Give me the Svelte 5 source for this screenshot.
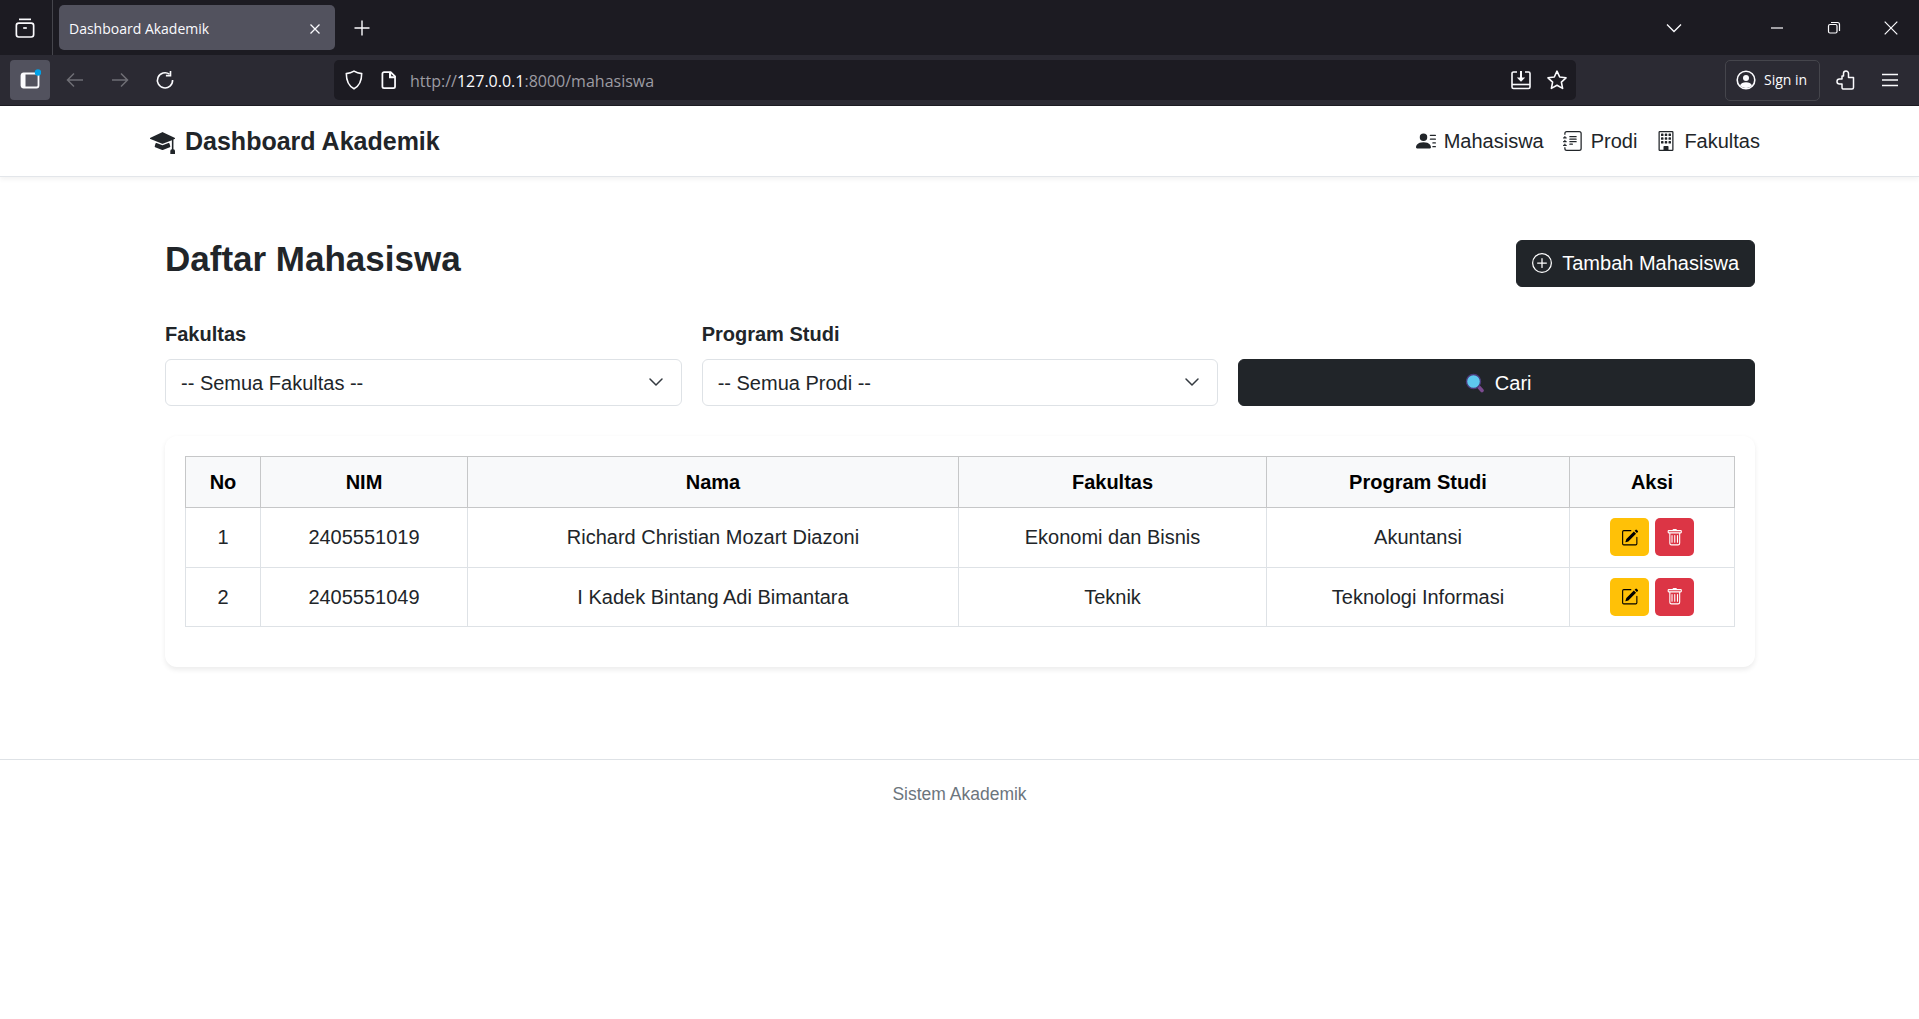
<script lang="ts">
  const rows = [
    { no: 1, nim: '2405551019', nama: 'Richard Christian Mozart Diazoni', fakultas: 'Ekonomi dan Bisnis', prodi: 'Akuntansi' },
    { no: 2, nim: '2405551049', nama: 'I Kadek Bintang Adi Bimantara', fakultas: 'Teknik', prodi: 'Teknologi Informasi' }
  ]
</script>

<div class="browser">
  <div class="tabbar">
    <div class="tabs-btn">
      <svg width="24" height="24" viewBox="0 0 20 20" fill="none" stroke="#fbfbfe" stroke-width="1.4"><path d="M5 2.800h10"/><rect x="2.800" y="6" width="14.400" height="11.500" rx="2"/><path d="M8.500 10h3"/></svg>
    </div>
    <div class="tab">
      <span class="tab-title">Dashboard Akademik</span>
      <svg width="12" height="12" viewBox="0 0 12 12" stroke="#fbfbfe" stroke-width="1.3"><path d="M1.500 1.500l9 9M10.500 1.500l-9 9"/></svg>
    </div>
    <div class="newtab">
      <svg width="16" height="16" viewBox="0 0 16 16" stroke="#fbfbfe" stroke-width="1.4"><path d="M8 .5v15M.5 8h15"/></svg>
    </div>
    <div class="grow"></div>
    <svg class="win-chev" width="16" height="10" viewBox="0 0 16 10" fill="none" stroke="#fbfbfe" stroke-width="1.3"><path d="M1 1.500l7 7 7-7"/></svg>
    <div class="win-btn">
      <svg width="14" height="14" viewBox="0 0 14 14" stroke="#fbfbfe" stroke-width="1.2"><path d="M1 7h12"/></svg>
    </div>
    <div class="win-btn">
      <svg width="14" height="14" viewBox="0 0 14 14" fill="none" stroke="#fbfbfe" stroke-width="1.2"><rect x="1.500" y="3.500" width="8.500" height="8.500" rx="1.500"/><path d="M4 1.500h6.500a2 2 0 0 1 2 2V10"/></svg>
    </div>
    <div class="win-btn">
      <svg width="14" height="14" viewBox="0 0 14 14" stroke="#fbfbfe" stroke-width="1.2"><path d="M.7.7l12.600 12.600M13.300.7L.7 13.300"/></svg>
    </div>
  </div>

  <div class="toolbar">
    <div class="sidebar-btn">
      <svg width="22" height="22" viewBox="0 0 22 22"><rect x="2.500" y="4.500" width="17" height="14" rx="2" fill="none" stroke="#fbfbfe" stroke-width="1.800"/><rect x="2.500" y="4.500" width="4" height="14" fill="#fbfbfe"/><circle cx="19" cy="3.500" r="3.200" fill="#00a2e8"/></svg>
    </div>
    <svg class="nav-ic back" width="20" height="20" viewBox="0 0 20 20" fill="none" stroke="#6e6e75" stroke-width="1.5"><path d="M18 10H2.500M9 3.500L2.500 10 9 16.500"/></svg>
    <svg class="nav-ic" width="20" height="20" viewBox="0 0 20 20" fill="none" stroke="#6e6e75" stroke-width="1.5"><path d="M2 10h15.500M11 3.500l6.500 6.500-6.500 6.500"/></svg>
    <svg class="nav-ic" width="20" height="20" viewBox="0 0 20 20" fill="none" stroke="#fbfbfe" stroke-width="1.600"><path d="M14.500 4.200A7.600 7.600 0 1 0 17.600 10"/><path d="M15.500 1v4.600h-4.600" /></svg>

    <div class="urlbar">
      <svg class="shield" width="22" height="22" viewBox="0 0 20 20" fill="none" stroke="#fbfbfe" stroke-width="1.400"><path d="M10 2c2.200 1.400 4.300 2 7 2.200C17 11 15 15.500 10 18 5 15.500 3 11 3 4.200 5.700 4 7.800 3.400 10 2z"/></svg>
      <svg width="20" height="22" viewBox="0 0 18 20" fill="none" stroke="#fbfbfe" stroke-width="1.600"><path d="M4.500 2.800h6l4 4v9a1.500 1.500 0 0 1-1.500 1.500H4.500A1.500 1.500 0 0 1 3 15.800V4.300a1.500 1.500 0 0 1 1.500-1.500z"/><path d="M10 3v4.500h4.500" stroke-width="2"/></svg>
      <span class="url"><span class="dim">http://</span>127.0.0.1<span class="dim">:8000/mahasiswa</span></span>
      <div class="grow"></div>
      <svg class="url-end" width="22" height="22" viewBox="0 0 22 22" fill="none" stroke="#fbfbfe" stroke-width="1.600"><path d="M7 3H3.500A1.500 1.500 0 0 0 2 4.500V18a1.500 1.500 0 0 0 1.500 1.500h15A1.500 1.500 0 0 0 20 18V4.500A1.500 1.500 0 0 0 18.500 3H15"/><path d="M2 15.500h18"/><path d="M11 2v9" stroke-width="2"/><path d="M6.800 8.500L11 12.800l4.200-4.300z" fill="#fbfbfe" stroke="none"/></svg>
      <svg width="22" height="22" viewBox="0 0 22 22" fill="none" stroke="#fbfbfe" stroke-width="1.600" stroke-linejoin="round"><path d="M11 2.200l2.700 5.800 6.300.8-4.600 4.300 1.200 6.300L11 16.300l-5.600 3.100 1.200-6.300L2 8.800l6.300-.8z"/></svg>
    </div>

    <div class="signin">
      <svg width="20" height="20" viewBox="0 0 20 20" fill="none" stroke="#fbfbfe" stroke-width="1.600"><circle cx="10" cy="10" r="8.800"/><circle cx="10" cy="8" r="3" fill="#fbfbfe" stroke="none"/><path d="M4 15.500c1-2.500 3-3.200 6-3.200s5 .7 6 3.200c-1.500 1.600-3.600 2.500-6 2.500s-4.500-.9-6-2.500z" fill="#fbfbfe" stroke="none"/></svg>
      <span>Sign in</span>
    </div>
    <svg class="ext" width="20" height="20" viewBox="0 0 20 20" fill="none" stroke="#fbfbfe" stroke-width="1.5" stroke-linejoin="round"><path d="M7 19h9a1.500 1.500 0 0 0 1.500-1.500V7.500H12.500V3.500a2.500 2.500 0 0 0-5 0v2.500H6v3H3.500a2.500 2.500 0 0 0 0 5H6v3.500A1.500 1.500 0 0 0 7 19z"/></svg>
    <svg class="menu" width="16" height="14" viewBox="0 0 16 14" stroke="#fbfbfe" stroke-width="1.5"><path d="M0 1.500h16M0 7h16M0 12.500h16"/></svg>
  </div>
</div>

<nav class="navbar">
  <a class="brand" href="#top">
    <svg class="bi" viewBox="0 0 16 16" fill="currentColor"><path d="M8.211 2.047a.5.5 0 0 0-.422 0l-7.500 3.500a.5.5 0 0 0 .025.917l7.500 3a.5.5 0 0 0 .372 0L14 7.140V13a1 1 0 0 0-1 1v2h3v-2a1 1 0 0 0-1-1V6.739l.686-.275a.5.5 0 0 0 .025-.917z"/><path d="M4.176 9.032a.5.5 0 0 0-.656.327l-.5 1.700a.5.5 0 0 0 .294.605l4.500 1.800a.5.5 0 0 0 .372 0l4.500-1.800a.5.5 0 0 0 .294-.605l-.5-1.700a.5.5 0 0 0-.656-.327L8 10.466z"/></svg>
    Dashboard Akademik
  </a>
  <div class="nav-links">
    <a href="#top">
      <svg class="bi" viewBox="0 0 16 16" fill="currentColor"><path d="M6 8a3 3 0 1 0 0-6 3 3 0 0 0 0 6m-5 6s-1 0-1-1 1-4 6-4 6 3 6 4-1 1-1 1zM11 3.500a.5.5 0 0 1 .5-.5h4a.5.5 0 0 1 0 1h-4a.5.5 0 0 1-.5-.5m.5 2.500a.5.5 0 0 0 0 1h4a.5.5 0 0 0 0-1zm2 3a.5.5 0 0 0 0 1h2a.5.5 0 0 0 0-1zm0 3a.5.5 0 0 0 0 1h2a.5.5 0 0 0 0-1z"/></svg>
      Mahasiswa
    </a>
    <a href="#top">
      <svg class="bi" viewBox="0 0 16 16" fill="currentColor"><path d="M5 10.500a.5.5 0 0 1 .5-.5h2a.5.5 0 0 1 0 1h-2a.5.5 0 0 1-.5-.5m0-2a.5.5 0 0 1 .5-.5h5a.5.5 0 0 1 0 1h-5a.5.5 0 0 1-.5-.5m0-2a.5.5 0 0 1 .5-.5h5a.5.5 0 0 1 0 1h-5a.5.5 0 0 1-.5-.5m0-2a.5.5 0 0 1 .5-.5h5a.5.5 0 0 1 0 1h-5a.5.5 0 0 1-.5-.5"/><path d="M3 0h10a2 2 0 0 1 2 2v12a2 2 0 0 1-2 2H3a2 2 0 0 1-2-2v-1h1v1a1 1 0 0 0 1 1h10a1 1 0 0 0 1-1V2a1 1 0 0 0-1-1H3a1 1 0 0 0-1 1v1H1V2a2 2 0 0 1 2-2"/><path d="M1 5v-.5a.5.5 0 0 1 1 0V5h.5a.5.5 0 0 1 0 1h-2a.5.5 0 0 1 0-1zm0 3v-.5a.5.5 0 0 1 1 0V8h.5a.5.5 0 0 1 0 1h-2a.5.5 0 0 1 0-1zm0 3v-.5a.5.5 0 0 1 1 0v.5h.5a.5.5 0 0 1 0 1h-2a.5.5 0 0 1 0-1z"/></svg>
      Prodi
    </a>
    <a href="#top">
      <svg class="bi" viewBox="0 0 16 16" fill="currentColor"><path d="M4 2.500a.5.5 0 0 1 .5-.5h1a.5.5 0 0 1 .5.500v1a.5.5 0 0 1-.5.500h-1a.5.5 0 0 1-.5-.5zm3 0a.5.5 0 0 1 .5-.5h1a.5.5 0 0 1 .5.500v1a.5.5 0 0 1-.5.500h-1a.5.5 0 0 1-.5-.5zm3.500-.5a.5.5 0 0 0-.5.500v1a.5.5 0 0 0 .5.500h1a.5.5 0 0 0 .5-.5v-1a.5.5 0 0 0-.5-.5zM4 5.500a.5.5 0 0 1 .5-.5h1a.5.5 0 0 1 .5.500v1a.5.5 0 0 1-.5.500h-1a.5.5 0 0 1-.5-.5zM7.500 5a.5.5 0 0 0-.5.500v1a.5.5 0 0 0 .5.500h1a.5.5 0 0 0 .5-.5v-1a.5.5 0 0 0-.5-.5zm2.500.500a.5.5 0 0 1 .5-.5h1a.5.5 0 0 1 .5.500v1a.5.5 0 0 1-.5.500h-1a.5.5 0 0 1-.5-.5zM4.500 8a.5.5 0 0 0-.5.500v1a.5.5 0 0 0 .5.500h1a.5.5 0 0 0 .5-.5v-1a.5.5 0 0 0-.5-.5zm2.500.500a.5.5 0 0 1 .5-.5h1a.5.5 0 0 1 .5.500v1a.5.5 0 0 1-.5.500h-1a.5.5 0 0 1-.5-.5zm3.500-.5a.5.5 0 0 0-.5.500v1a.5.5 0 0 0 .5.500h1a.5.5 0 0 0 .5-.5v-1a.5.5 0 0 0-.5-.5z"/><path d="M2 1a1 1 0 0 1 1-1h10a1 1 0 0 1 1 1v14a1 1 0 0 1-1 1H3a1 1 0 0 1-1-1zm11 0H3v14h3v-2.500a.5.5 0 0 1 .5-.5h3a.5.5 0 0 1 .5.500V15h3z"/></svg>
      Fakultas
    </a>
  </div>
</nav>

<main class="page">
  <div class="head">
    <h3>Daftar Mahasiswa</h3>
    <button class="btn dark add">
      <svg class="bi" viewBox="0 0 16 16" fill="currentColor"><path d="M8 15A7 7 0 1 1 8 1a7 7 0 0 1 0 14m0 1A8 8 0 1 0 8 0a8 8 0 0 0 0 16"/><path d="M8 4a.5.5 0 0 1 .5.500v3h3a.5.5 0 0 1 0 1h-3v3a.5.5 0 0 1-1 0v-3h-3a.5.5 0 0 1 0-1h3v-3A.5.5 0 0 1 8 4"/></svg>
      Tambah Mahasiswa
    </button>
  </div>

  <form class="filters">
    <div class="field">
      <label for="fakultas">Fakultas</label>
      <div class="select">
        <select id="fakultas"><option>-- Semua Fakultas --</option></select>
        <svg width="16" height="16" viewBox="0 0 16 16" fill="none" stroke="#343a40" stroke-width="1.500" stroke-linecap="round" stroke-linejoin="round"><path d="m2 5 6 6 6-6"/></svg>
      </div>
    </div>
    <div class="field">
      <label for="prodi">Program Studi</label>
      <div class="select">
        <select id="prodi"><option>-- Semua Prodi --</option></select>
        <svg width="16" height="16" viewBox="0 0 16 16" fill="none" stroke="#343a40" stroke-width="1.500" stroke-linecap="round" stroke-linejoin="round"><path d="m2 5 6 6 6-6"/></svg>
      </div>
    </div>
    <button class="btn dark search" type="button">
      <svg width="20" height="20" viewBox="0 0 20 20"><path d="M12.500 12.500l4.500 5" stroke="#7b4a8f" stroke-width="3.600" stroke-linecap="round"/><circle cx="8.500" cy="8.500" r="7" fill="#5ec8ee" stroke="#4b3a7a" stroke-width="1.400"/></svg>
      Cari
    </button>
  </form>

  <div class="card">
    <table>
      <colgroup>
        <col style="width: 75px" />
        <col style="width: 207px" />
        <col style="width: 491px" />
        <col style="width: 308px" />
        <col style="width: 303px" />
        <col style="width: 165px" />
      </colgroup>
      <thead>
        <tr>
          <th>No</th>
          <th>NIM</th>
          <th>Nama</th>
          <th>Fakultas</th>
          <th>Program Studi</th>
          <th>Aksi</th>
        </tr>
      </thead>
      <tbody>
        {#each rows as r}
          <tr>
            <td>{r.no}</td>
            <td>{r.nim}</td>
            <td>{r.nama}</td>
            <td>{r.fakultas}</td>
            <td>{r.prodi}</td>
            <td>
              <div class="actions">
                <button class="act edit" aria-label="Edit">
                  <svg class="bi" viewBox="0 0 16 16" fill="currentColor"><path d="M15.502 1.940a.5.5 0 0 1 0 .706L14.459 3.690l-2-2L13.502.646a.5.5 0 0 1 .707 0l1.293 1.293zm-1.750 2.456-2-2L4.939 9.210a.5.5 0 0 0-.121.196l-.805 2.414a.25.25 0 0 0 .316.316l2.414-.805a.5.5 0 0 0 .196-.12l6.813-6.814z"/><path d="M1 13.500A1.500 1.500 0 0 0 2.500 15h11a1.500 1.500 0 0 0 1.500-1.500v-6a.5.5 0 0 0-1 0v6a.5.5 0 0 1-.5.5h-11a.5.5 0 0 1-.5-.5v-11a.5.5 0 0 1 .5-.5H9a.5.5 0 0 0 0-1H2.500A1.500 1.500 0 0 0 1 2.500z"/></svg>
                </button>
                <button class="act del" aria-label="Hapus">
                  <svg class="bi" viewBox="0 0 16 16" fill="currentColor"><path d="M5.500 5.500A.5.5 0 0 1 6 6v6a.5.5 0 0 1-1 0V6a.5.5 0 0 1 .5-.5m2.500 0a.5.5 0 0 1 .5.500v6a.5.5 0 0 1-1 0V6a.5.5 0 0 1 .5-.5m3 .500a.5.5 0 0 0-1 0v6a.5.5 0 0 0 1 0z"/><path d="M14.500 3a1 1 0 0 1-1 1H13v9a2 2 0 0 1-2 2H5a2 2 0 0 1-2-2V4h-.5a1 1 0 0 1-1-1V2a1 1 0 0 1 1-1H6a1 1 0 0 1 1-1h2a1 1 0 0 1 1 1h3.500a1 1 0 0 1 1 1zM4.118 4 4 4.059V13a1 1 0 0 0 1 1h6a1 1 0 0 0 1-1V4.059L11.882 4zM2.500 3h11V2h-11z"/></svg>
                </button>
              </div>
            </td>
          </tr>
        {/each}
      </tbody>
    </table>
  </div>
</main>

<footer class="footer">Sistem Akademik</footer>

<style>
  :global(body) {
    margin: 0;
    background: #fff;
    color: #212529;
    font-family: "Liberation Sans", Arial, sans-serif;
    font-size: 20px;
    line-height: 30px;
  }

  .grow { flex: 1; }

  /* browser chrome */
  .browser {
    height: 106px;
    background: #2b2a33;
    font-family: "Open Sans", sans-serif;
  }
  .tabbar {
    height: 55px;
    background: #1c1b22;
    display: flex;
    align-items: center;
  }
  .tabs-btn {
    width: 53px;
    height: 55px;
    box-sizing: border-box;
    border-right: 1px solid #45454c;
    padding-left: 13px;
    display: flex;
    align-items: center;
    flex-shrink: 0;
  }
  .tab {
    margin-left: 6px;
    width: 276px;
    height: 45px;
    box-sizing: border-box;
    padding: 2px 14px 0 10px;
    background: #52525e;
    border-radius: 5px;
    color: #fbfbfe;
    display: flex;
    align-items: center;
    justify-content: space-between;
  }
  .tab-title { font-size: 14px; line-height: 20px; }
  .newtab { margin-left: 19px; display: flex; }
  .win-chev { margin-right: 66px; }
  .win-btn {
    width: 57px;
    display: flex;
    justify-content: center;
  }
  .toolbar {
    height: 50px;
    display: flex;
    align-items: center;
    border-bottom: 1px solid #1c1b22;
  }
  .sidebar-btn {
    margin-left: 10px;
    width: 40px;
    height: 40px;
    background: #52525e;
    border-radius: 4px;
    display: flex;
    align-items: center;
    justify-content: center;
  }
  .nav-ic { margin-left: 25px; }
  .back { margin-left: 15px; }
  .urlbar {
    margin-left: 159px;
    width: 1242px;
    height: 40px;
    background: #1c1b22;
    border-radius: 5px;
    display: flex;
    align-items: center;
    padding: 0 8px 0 9px;
    box-sizing: border-box;
  }
  .shield { margin-right: 14px; }
  .url {
    margin-left: 11px;
    padding-top: 2px;
    font-size: 16px;
    line-height: 20px;
    color: #fbfbfe;
  }
  .dim { color: #9c9ca3; }
  .url-end { margin-right: 14px; }
  .signin {
    margin-left: 149px;
    width: 95px;
    height: 41px;
    box-sizing: border-box;
    border: 1px solid #45454c;
    border-radius: 5px;
    padding-left: 10px;
    display: flex;
    align-items: center;
    gap: 8px;
    color: #fbfbfe;
    font-size: 14px;
    line-height: 20px;
  }
  .ext { margin-left: 16px; }
  .menu { margin-left: 26px; }

  /* navbar */
  .navbar {
    height: 70px;
    background: #fff;
    border-bottom: 1px solid #e3e6ea;
    box-shadow: 0 2.500px 5px rgba(0, 0, 0, .05);
    display: flex;
    align-items: center;
    justify-content: space-between;
    padding: 0 159px 0 150px;
  }
  .bi {
    width: 20px;
    height: 20px;
    flex-shrink: 0;
  }
  a { color: inherit; text-decoration: none; }
  .brand {
    display: flex;
    align-items: center;
    gap: 10px;
    font-size: 25px;
    font-weight: 700;
    width: 290px;
  }
  .brand .bi { width: 25px; height: 25px; }
  .nav-links { display: flex; gap: 19px; }
  .nav-links a {
    display: flex;
    align-items: center;
    gap: 8px;
  }

  /* page */
  .page { padding: 63px 164px 0 165px; }
  .head {
    display: flex;
    justify-content: space-between;
    align-items: flex-start;
    margin-bottom: 32px;
  }
  h3 {
    margin: -2px 0 0;
    font-size: 35px;
    line-height: 42px;
    font-weight: 700;
  }
  .btn {
    font: inherit;
    height: 47px;
    border-radius: 6px;
    border: 1px solid #212529;
    display: flex;
    align-items: center;
    justify-content: center;
    gap: 10px;
    cursor: pointer;
  }
  .dark { background: #212529; color: #fff; }
  .add { padding: 0 15px 2px; }
  .search { padding-left: 9px; }

  .filters {
    display: grid;
    grid-template-columns: 1fr 1fr 1fr;
    gap: 20px;
    align-items: end;
    margin-bottom: 30px;
  }
  .field { display: flex; flex-direction: column; }
  label {
    font-weight: 700;
    margin-bottom: 10px;
  }
  .select { position: relative; }
  .select select {
    appearance: none;
    width: 100%;
    height: 47px;
    box-sizing: border-box;
    border: 1px solid #dee2e6;
    border-radius: 6px;
    background: #fff;
    color: #212529;
    font: inherit;
    padding: 0 45px 0 15px;
  }
  .select svg {
    position: absolute;
    right: 18px;
    top: 15px;
    pointer-events: none;
  }

  .card {
    background: #fff;
    border-radius: 12px;
    box-shadow: 0 2.500px 5px rgba(0, 0, 0, .075);
    padding: 20px;
  }
  table {
    width: 1549px;
    table-layout: fixed;
    border-collapse: collapse;
    margin-bottom: 20px;
  }
  th, td {
    text-align: center;
    vertical-align: middle;
    padding: 0;
    border: 1px solid #dee2e6;
  }
  th {
    height: 50px;
    background: #f8f9fa;
    color: #000;
    border-color: #c6c7c8;
  }
  td { height: 58.500px; }
  .actions {
    display: flex;
    justify-content: center;
    gap: 6px;
  }
  .act {
    width: 39px;
    height: 38px;
    padding: 0;
    border: none;
    border-radius: 5px;
    display: flex;
    align-items: center;
    justify-content: center;
    cursor: pointer;
  }
  .act .bi { width: 17.500px; height: 17.500px; }
  .edit { background: #ffc107; color: #000; }
  .del { background: #dc3545; color: #fff; }

  .footer {
    margin-top: 92px;
    border-top: 1px solid #dee2e6;
    padding-top: 19px;
    text-align: center;
    color: #6c757d;
    font-size: 17.500px;
  }
</style>
